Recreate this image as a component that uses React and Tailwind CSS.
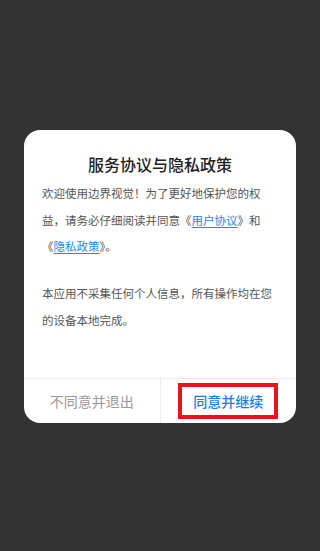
export default function App() {
  return (
    <div
      className="w-[320px] h-[551px] bg-[#333333] flex items-start justify-center pt-[130px]"
      style={{ fontFamily: '"Noto Sans CJK SC", "Noto Sans", sans-serif' }}
    >
      <div className="w-[272px] bg-white rounded-[16px] overflow-hidden flex flex-col">
        <h1 className="pt-[22px] text-center text-[16px] leading-[24px] font-medium text-[#222222]">
          服务协议与隐私政策
        </h1>
        <div className="px-[18px] pt-[4px] pb-[45px] text-[11.5px] leading-[26.5px] text-[#555555]">
          <p>
            欢迎使用边界视觉！为了更好地保护您的权益，请务必仔细阅读并同意《
            <span className="text-[#1e88f0] underline underline-offset-2">用户协议</span>
            》和《
            <span className="text-[#1e88f0] underline underline-offset-2">隐私政策</span>
            》。
          </p>
          <p className="mt-[20.5px]">本应用不采集任何个人信息，所有操作均在您的设备本地完成。</p>
        </div>
        <div className="flex h-[45px] border-t border-[#eeeeee]">
          <button className="flex-1 flex items-center justify-center text-[14px] text-[#999999] border-r border-[#eeeeee]">
            不同意并退出
          </button>
          <button className="flex-1 flex items-center justify-center">
            <span className="h-[36px] px-[11px] flex items-center border-[4px] border-[#e8141c] text-[14px] font-medium text-[#1a7cf0]">
              同意并继续
            </span>
          </button>
        </div>
      </div>
    </div>
  );
}
